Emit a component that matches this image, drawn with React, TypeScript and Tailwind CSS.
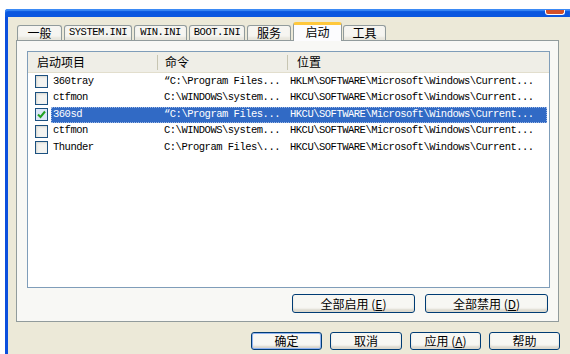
import { ReactNode } from 'react'

const mono = "font-['Liberation_Mono',monospace] text-[10.5px] tracking-[-0.5px]"

type Row = { name: string; cmd: string; loc: string; checked?: boolean; selected?: boolean }

const rows: Row[] = [
  { name: '360tray', cmd: '“C:\\Program Files...', loc: 'HKLM\\SOFTWARE\\Microsoft\\Windows\\Current...' },
  { name: 'ctfmon', cmd: 'C:\\WINDOWS\\system...', loc: 'HKCU\\SOFTWARE\\Microsoft\\Windows\\Current...' },
  { name: '360sd', cmd: '“C:\\Program Files...', loc: 'HKCU\\SOFTWARE\\Microsoft\\Windows\\Current...', checked: true, selected: true },
  { name: 'ctfmon', cmd: 'C:\\WINDOWS\\system...', loc: 'HKCU\\SOFTWARE\\Microsoft\\Windows\\Current...' },
  { name: 'Thunder', cmd: 'C:\\Program Files\\...', loc: 'HKCU\\SOFTWARE\\Microsoft\\Windows\\Current...' },
]

function Tab({ children, width, active, last }: { children: ReactNode; width: string; active?: boolean; last?: boolean }) {
  if (active) {
    return (
      <div
        className={`${width} relative z-10 -mb-px mr-px flex h-[19px] shrink-0 items-center justify-center rounded-t-[3px] border-x border-t-[3px] border-x-[#919B9C] border-t-[#FFC83C] bg-[#FCFCFE] pb-[2px] text-[12px]`}
      >
        {children}
      </div>
    )
  }
  return (
    <div
      className={`${width} ${last ? '' : 'mr-[2px]'} flex h-[15px] shrink-0 items-center justify-center rounded-t-[3px] border-x border-t border-[#919B9C] bg-[#F6F5F1] text-[12px] shadow-[inset_0_-3px_2px_#E8E6DD]`}
    >
      {children}
    </div>
  )
}

function Checkbox({ checked }: { checked?: boolean }) {
  return (
    <div
      className={`flex h-[13px] w-[13px] items-center justify-center border border-[#1C5180] ${
        checked ? 'bg-[#DCE6F7]' : 'bg-[#F3F3F0] shadow-[inset_1px_1px_2px_#D6D6CF]'
      }`}
    >
      {checked && (
        <svg width="9" height="9" viewBox="0 0 9 9">
          <path d="M1 4.5 L3.5 7 L8 1.5" fill="none" stroke="#21A121" strokeWidth="2" />
        </svg>
      )}
    </div>
  )
}

function Button({ children, width, isDefault }: { children: ReactNode; width: string; isDefault?: boolean }) {
  return (
    <div
      className={`${width} flex shrink-0 items-center justify-center rounded-[3px] border border-[#003C74] bg-[#F7F7F3] text-[12px] text-black ${
        isDefault
          ? 'shadow-[inset_0_0_0_1px_#8FB2F0,inset_0_-3px_2px_#D9D6CB]'
          : 'shadow-[inset_0_-3px_2px_#DCD9CE]'
      }`}
    >
      {children}
    </div>
  )
}

export default function App() {
  return (
    <div className="flex h-[354px] w-[570px] flex-col overflow-hidden bg-white font-['Noto_Sans_CJK_SC',sans-serif] text-black">
      <div className="h-[9px] shrink-0 bg-white" />
      {/* title bar strip */}
      <div className="ml-[5px] flex h-[8px] shrink-0 justify-end rounded-tl-[3px] bg-[#0A57E0] pr-[5px] shadow-[inset_0_2px_1px_#3B8AF5]">
        <div className="mt-px h-[5px] w-[20px] rounded-b-[3px] border-x border-b border-white bg-[#D3502A]" />
      </div>

      <div className="flex h-[337px] shrink-0">
        <div className="ml-[5px] w-[3px] shrink-0 bg-[#0B4FDD]" />

        {/* window body */}
        <div className="flex flex-1 flex-col bg-[#ECE9D8] pl-[8px] pr-[11px] pt-[5px]">
          {/* tabs */}
          <div className="flex h-[18px] shrink-0 items-end pl-[1px]">
            <Tab width="w-[45px]">一般</Tab>
            <Tab width="w-[68px]">
              <span className={mono}>SYSTEM.INI</span>
            </Tab>
            <Tab width="w-[53px]">
              <span className={mono}>WIN.INI</span>
            </Tab>
            <Tab width="w-[56px]">
              <span className={mono}>BOOT.INI</span>
            </Tab>
            <Tab width="w-[44px]">服务</Tab>
            <Tab width="w-[49px]" active>
              启动
            </Tab>
            <Tab width="w-[43px]" last>
              工具
            </Tab>
          </div>

          {/* tab panel */}
          <div className="flex h-[282px] shrink-0 flex-col border border-[#919B9C] bg-[#F8F8F5] pl-[10px] pr-[8px] pt-[10px]">
            {/* list view */}
            <div className="h-[237px] shrink-0 border border-[#7F9DB9] bg-white">
              <div className="flex h-[21px] items-center border-b border-[#E2DECD] bg-[#EFEEE7] text-[12px]">
                <div className="w-[129px] pl-[9px]">启动项目</div>
                <div className="h-[15px] w-px bg-[#C7C5B2]" />
                <div className="w-[129px] pl-[7px]">命令</div>
                <div className="h-[15px] w-px bg-[#C7C5B2]" />
                <div className="flex-1 pl-[9px]">位置</div>
              </div>

              <div className="pt-[0.5px]">
                {rows.map((r, i) => (
                  <div key={i} className="flex h-[16.5px] items-center">
                    <div className="flex w-[23px] justify-start pl-[7px]">
                      <Checkbox checked={r.checked} />
                    </div>
                    <div
                      className={`mr-[2px] flex h-full flex-1 items-center whitespace-nowrap ${mono} ${
                        r.selected ? 'bg-[#316AC5] text-white outline outline-1 -outline-offset-1 outline-dotted outline-[#9DB8E4]' : ''
                      }`}
                    >
                      <div className="w-[106px] pl-[2px]">{r.name}</div>
                      <div className="w-[130px] pl-[7px]">{r.cmd}</div>
                      <div className="flex-1 pl-[3px]">{r.loc}</div>
                    </div>
                  </div>
                ))}
              </div>
            </div>

            <div className="mt-[6px] flex justify-end gap-[10px] pr-[2px]">
              <Button width="w-[123px] h-[19px]">
                全部启用 (<span className="underline">E</span>)
              </Button>
              <Button width="w-[123px] h-[19px]">
                全部禁用 (<span className="underline">D</span>)
              </Button>
            </div>
          </div>

          {/* dialog buttons */}
          <div className="-mr-[1px] mt-[10px] flex shrink-0 justify-end gap-[8px]">
            <Button width="w-[71px] h-[18px]" isDefault>
              确定
            </Button>
            <Button width="w-[72px] h-[18px]">取消</Button>
            <Button width="w-[71px] h-[18px]">
              应用 (<span className="underline">A</span>)
            </Button>
            <Button width="w-[71px] h-[18px]">帮助</Button>
          </div>
        </div>
      </div>
    </div>
  )
}
